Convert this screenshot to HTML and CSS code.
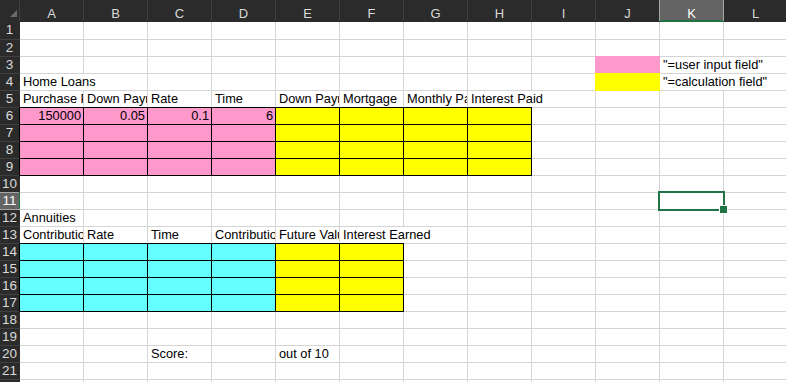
FILE: index.html
```html
<!DOCTYPE html>
<html lang="en">
<head>
  <meta charset="UTF-8">
  <meta name="viewport" content="width=device-width, initial-scale=1.0">
  <title>Home Loans and Annuities</title>
  <link rel="stylesheet" href="styles.css">
</head>
<body>
  <div class="sheet" id="sheet"></div>

  <script>
    // Sheet layout
    const COLUMNS = ['A', 'B', 'C', 'D', 'E', 'F', 'G', 'H', 'I', 'J', 'K', 'L'];
    const ROW_COUNT = 22;
    const SELECTED = { col: 'K', row: 11 };

    // Text cells (span = text runs into the next empty cell)
    const CELLS = {
      J3: { fill: 'pink' },
      K3: { text: '"=user input field"', span: 2 },
      J4: { fill: 'yellow' },
      K4: { text: '"=calculation field"', span: 2 },
      A4: { text: 'Home Loans', span: 2 },
      A5: 'Purchase Price',
      B5: 'Down Payment',
      C5: 'Rate',
      D5: 'Time',
      E5: 'Down Payment',
      F5: 'Mortgage',
      G5: 'Monthly Payment',
      H5: { text: 'Interest Paid', span: 2 },
      A12: 'Annuities',
      A13: 'Contribution',
      B13: 'Rate',
      C13: 'Time',
      D13: 'Contribution',
      E13: 'Future Value',
      F13: { text: 'Interest Earned', span: 2 },
      C20: 'Score:',
      E20: 'out of 10'
    };

    const VALUES = { A6: 150000, B6: 0.05, C6: 0.1, D6: 6 };

    // Coloured blocks with black borders
    const BLOCKS = [
      { fill: 'pink', cols: 'ABCD', rows: [6, 9] },
      { fill: 'yellow', cols: 'EFGH', rows: [6, 9] },
      { fill: 'cyan', cols: 'ABCD', rows: [14, 17] },
      { fill: 'yellow', cols: 'EF', rows: [14, 17] }
    ];

    const sheet = document.getElementById('sheet');

    function addCell(className, text) {
      const div = document.createElement('div');
      div.className = className;
      if (text !== undefined) div.textContent = text;
      sheet.appendChild(div);
      return div;
    }

    function blockFor(col, row) {
      return BLOCKS.find(b => b.cols.includes(col) && row >= b.rows[0] && row <= b.rows[1]);
    }

    // Header row
    addCell('corner').innerHTML =
      '<svg width="19" height="21" viewBox="0 0 19 21"><polygon points="17,10 17,17 10,17" fill="#6b6b6b"/></svg>';
    COLUMNS.forEach(col => {
      addCell('col-head' + (col === SELECTED.col ? ' active' : ''), col);
    });

    // Rows
    for (let row = 1; row <= ROW_COUNT; row++) {
      addCell('row-head' + (row === SELECTED.row ? ' active' : ''), row);

      let skip = 0;
      COLUMNS.forEach(col => {
        if (skip) { skip--; return; }

        const id = col + row;
        let entry = CELLS[id];
        if (typeof entry === 'string') entry = { text: entry };
        entry = entry || {};

        const classes = ['cell'];
        let text = entry.text;

        if (VALUES[id] !== undefined) {
          text = String(VALUES[id]);
          classes.push('num');
        }

        const block = blockFor(col, row);
        if (block) classes.push(block.fill, 'boxed');
        if (entry.fill) classes.push(entry.fill, 'filled');

        if (entry.span) {
          classes.push('span-' + entry.span);
          skip = entry.span - 1;
        }

        if (col === SELECTED.col && row === SELECTED.row) classes.push('selected');

        addCell(classes.join(' '), text);
      });
    }
  </script>
</body>
</html>
```

FILE: styles.css
```css
:root {
  --grid-line: #d4d4d4;
  --header-bg: #2b2b2b;
  --header-line: #404040;
  --header-text: #dadada;
  --header-active: #646464;
  --header-active-line: #a6a6a6;
  --accent: #217346;
  --pink: #ff99cc;
  --yellow: #ffff00;
  --cyan: #66ffff;
}

* {
  box-sizing: border-box;
  margin: 0;
  padding: 0;
}

body {
  background: var(--header-bg);
  font-family: "Liberation Sans", Arial, sans-serif;
  overflow: hidden;
}

.sheet {
  display: grid;
  grid-template-columns: 19px repeat(12, 63px);
  grid-template-rows: 21px 17px repeat(21, 16px);
  gap: 1px;
  width: max-content;
  background: var(--grid-line);
}

/* Headers */

.corner {
  background: var(--header-bg);
  box-shadow: 1px 0 0 var(--header-line), 0 1px 0 var(--header-bg), 1px 1px 0 var(--header-bg);
}

.corner svg {
  display: block;
}

.col-head {
  background: var(--header-bg);
  color: var(--header-text);
  font-size: 13px;
  line-height: 14px;
  padding-top: 7px;
  text-align: center;
  box-shadow: 1px 0 0 var(--header-line), 0 1px 0 var(--header-bg), 1px 1px 0 var(--header-bg);
}

.col-head.active {
  background: var(--header-active);
  color: #ffffff;
  box-shadow: inset 0 -1px 0 var(--accent), 1px 0 0 var(--header-active-line),
    -1px 0 0 var(--header-active-line), 0 1px 0 var(--accent), 1px 1px 0 var(--accent);
}

.row-head {
  background: var(--header-bg);
  color: var(--header-text);
  font-size: 13.5px;
  line-height: 16px;
  text-align: center;
  white-space: nowrap;
  box-shadow: 0 1px 0 var(--header-line), 1px 0 0 var(--header-bg), 1px 1px 0 var(--header-line);
}

.row-head.active {
  background: var(--header-active);
  color: #ffffff;
  box-shadow: 0 1px 0 var(--header-active-line), 0 -1px 0 var(--header-active-line),
    1px 0 0 var(--accent);
}

/* Cells */

.cell {
  background: #ffffff;
  color: #000000;
  font-size: 12.8px;
  line-height: 16px;
  padding: 0 2px 0 3px;
  white-space: nowrap;
  overflow: hidden;
}

.cell.num {
  text-align: right;
}

.span-2 {
  grid-column: span 2;
}

.pink {
  background: var(--pink);
  outline-color: var(--pink);
}

.yellow {
  background: var(--yellow);
  outline-color: var(--yellow);
}

.cyan {
  background: var(--cyan);
}

.filled {
  outline-width: 1px;
  outline-style: solid;
}

.boxed {
  outline: 1px solid #000000;
}

.selected {
  position: relative;
  overflow: visible;
  z-index: 2;
  outline: 2px solid var(--accent);
}

.selected::after {
  content: "";
  position: absolute;
  right: -5px;
  bottom: -5px;
  width: 7px;
  height: 7px;
  background: var(--accent);
  border: 1px solid #ffffff;
}
```
